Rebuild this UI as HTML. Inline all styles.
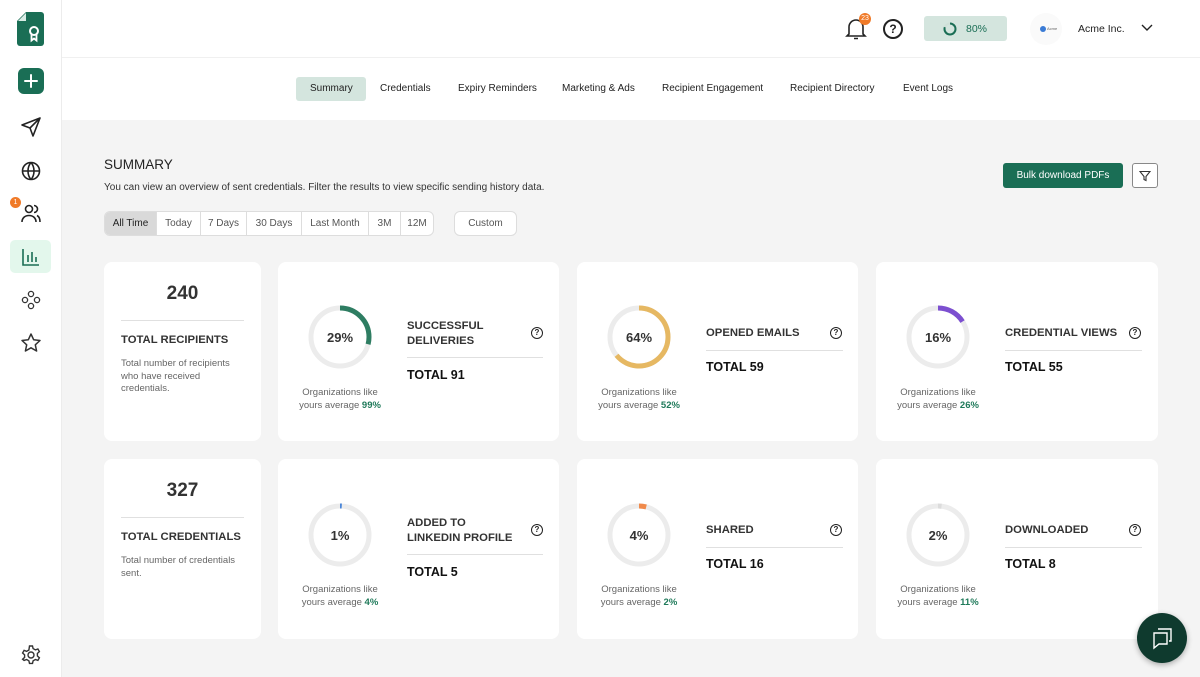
<!DOCTYPE html>
<html><head><meta charset="utf-8"><style>
*{box-sizing:border-box;margin:0;padding:0}
body{width:1200px;height:677px;overflow:hidden;font-family:"Liberation Sans",sans-serif;background:#f4f4f4;color:#222;position:relative}
.abs{position:absolute}
.side{left:0;top:0;width:62px;height:677px;background:#fff;border-right:1px solid #ececec}
.top{left:62px;top:0;width:1138px;height:120px;background:#fff}
.hdrline{left:62px;top:57px;width:1138px;height:1px;background:#f0f0f0}
.nav{top:77px;height:24px;font-size:10px;color:#222;line-height:24px}
.card{background:#fff;border-radius:8px}
.rt{font-size:11.3px;font-weight:bold;color:#333;line-height:15px}
.tot{font-size:12.5px;font-weight:bold;color:#111}
.org{font-size:9.5px;color:#666;text-align:center;width:96px;line-height:13px}
.org b{color:#1f7a5a}
.q{width:12px;height:12px;border:1.5px solid #222;border-radius:50%;font-size:8px;font-weight:bold;text-align:center;line-height:9px}
.div{height:1px;background:#e0e0e0}
.seg{display:flex;left:104px;top:211px;height:25px;border:1px solid #ddd;border-radius:6px;overflow:hidden;background:#fff;font-size:10px;color:#555}
.seg div{line-height:23px;border-right:1px solid #ddd;text-align:center}
.seg div:last-child{border-right:none}
</style></head><body>
<div class="abs side"></div>
<div class="abs top"></div>
<div class="abs hdrline"></div>
<svg class="abs" style="left:17px;top:12px" width="27" height="34" viewBox="0 0 27 34"><path d="M9 0H24a3 3 0 0 1 3 3V31a3 3 0 0 1-3 3H3a3 3 0 0 1-3-3V9Z" fill="#1a6e55"/><path d="M1 9L9 1V9Z" fill="#d9ece5"/><circle cx="17" cy="19" r="4" fill="none" stroke="#fff" stroke-width="2"/><path d="M14.5 22.5v6l2.5-2 2.5 2v-6" fill="none" stroke="#fff" stroke-width="1.8"/></svg>
<div class="abs" style="left:18px;top:68px;width:26px;height:26px;background:#1a6e55;border-radius:6px"></div>
<svg class="abs" style="left:18px;top:68px" width="26" height="26"><path d="M13 7v12M7 13h12" stroke="#fff" stroke-width="2" stroke-linecap="round"/></svg>
<svg class="abs" style="left:20px;top:116px" width="22" height="22" viewBox="0 0 22 22" fill="none" stroke="#222" stroke-width="1.6" stroke-linejoin="round"><path d="M20 2L2 9l8 3 3 8z M20 2L10 12"/></svg>
<svg class="abs" style="left:20px;top:160px" width="22" height="22" viewBox="0 0 22 22" fill="none" stroke="#222" stroke-width="1.6"><circle cx="11" cy="11" r="8.5"/><path d="M2.5 11h17M11 2.5c-4 4.5-4 12.5 0 17M11 2.5c4 4.5 4 12.5 0 17"/></svg>
<svg class="abs" style="left:20px;top:202px" width="22" height="22" viewBox="0 0 22 22" fill="none" stroke="#222" stroke-width="1.6"><circle cx="9" cy="7" r="3.5"/><path d="M2 20c0-4 3-6.5 7-6.5s7 2.5 7 6.5M14 3.5a3.5 3.5 0 0 1 0 7M17 13.5c2 1 3 3 3 6.5"/></svg>
<div class="abs" style="left:10px;top:197px;width:11px;height:11px;border-radius:50%;background:#f07a28;color:#fff;font-size:7px;text-align:center;line-height:11px">1</div>
<div class="abs" style="left:10px;top:240px;width:41px;height:33px;background:#e3f7ec;border-radius:5px"></div>
<svg class="abs" style="left:20px;top:246px" width="22" height="22" viewBox="0 0 22 22" fill="none" stroke="#1a6e55" stroke-width="1.6"><path d="M3 3v16h16M8 16V9M12 16V6M16 16v-5"/></svg>
<svg class="abs" style="left:20px;top:289px" width="22" height="22" viewBox="0 0 22 22" fill="none" stroke="#333" stroke-width="1.3"><circle cx="11" cy="5" r="2.6"/><circle cx="11" cy="17" r="2.6"/><circle cx="5" cy="11" r="2.6"/><circle cx="17" cy="11" r="2.6"/></svg>
<svg class="abs" style="left:20px;top:332px" width="22" height="22" viewBox="0 0 22 22" fill="none" stroke="#333" stroke-width="1.5" stroke-linejoin="round"><path d="M11 2l2.7 5.8 6.3.7-4.7 4.3 1.3 6.2L11 15.8 5.4 19l1.3-6.2L2 8.5l6.3-.7z"/></svg>
<svg class="abs" style="left:20px;top:644px" width="22" height="22" viewBox="0 0 22 22" fill="none" stroke="#333" stroke-width="1.4"><circle cx="11" cy="11" r="3"/><path d="M9.5 2h3l.6 2.6 2.3 1.3 2.5-.9 1.5 2.6-2 1.8v2.6l2 1.8-1.5 2.6-2.5-.9-2.3 1.3-.6 2.6h-3l-.6-2.6-2.3-1.3-2.5.9L2.6 15.2l2-1.8v-2.6l-2-1.8L4.1 6.4l2.5.9 2.3-1.3z"/></svg>
<svg class="abs" style="left:845px;top:17px" width="22" height="24" viewBox="0 0 22 24" fill="none" stroke="#222" stroke-width="1.6"><path d="M4 17V10a7 7 0 0 1 14 0v7l2 2H2z M9 21.5h4"/></svg>
<div class="abs" style="left:859px;top:13px;width:12px;height:12px;border-radius:50%;background:#f07a28;color:#fff;font-size:7px;text-align:center;line-height:12px">23</div>
<div class="abs" style="left:883px;top:19px;width:20px;height:20px;border:2px solid #222;border-radius:50%;font-size:12px;font-weight:bold;text-align:center;line-height:16px">?</div>
<div class="abs" style="left:924px;top:16px;width:83px;height:25px;background:#d4e5de;border-radius:3px"></div>
<svg class="abs" style="left:943px;top:22px" width="14" height="14"><circle cx="7" cy="7" r="5.5" fill="none" stroke="#cfe0d8" stroke-width="2"/><circle cx="7" cy="7" r="5.5" fill="none" stroke="#1a6e55" stroke-width="2" stroke-dasharray="27.6 34.6" transform="rotate(-90 7 7)"/></svg>
<div class="abs" style="left:966px;top:23px;font-size:10.5px;color:#1a6e55">80%</div>
<div class="abs" style="left:1030px;top:13px;width:32px;height:32px;border-radius:50%;background:#fafafa"></div>
<div class="abs" style="left:1040px;top:26px;width:6px;height:6px;border-radius:50%;background:#3a7bd5"></div>
<div class="abs" style="left:1047px;top:26px;font-size:4px;color:#666">Acme</div>
<div class="abs" style="left:1078px;top:23px;font-size:10.5px;color:#222">Acme Inc.</div>
<svg class="abs" style="left:1141px;top:23px" width="12" height="10"><path d="M1 2l5 5 5-5" fill="none" stroke="#222" stroke-width="1.4"/></svg>
<div class="abs" style="left:296px;top:77px;width:70px;height:24px;background:#d4e5de;border-radius:3px"></div>
<div class="abs nav" style="left:310px">Summary</div>
<div class="abs nav" style="left:380px">Credentials</div>
<div class="abs nav" style="left:458px">Expiry Reminders</div>
<div class="abs nav" style="left:562px">Marketing &amp; Ads</div>
<div class="abs nav" style="left:662px">Recipient Engagement</div>
<div class="abs nav" style="left:790px">Recipient Directory</div>
<div class="abs nav" style="left:903px">Event Logs</div>
<div class="abs" style="left:104px;top:157px;font-size:13.5px;color:#222">SUMMARY</div>
<div class="abs" style="left:104px;top:182px;font-size:10px;color:#333">You can view an overview of sent credentials. Filter the results to view specific sending history data.</div>
<div class="abs seg"><div style="width:52px;background:#d9d9d9;color:#222">All Time</div><div style="width:44px">Today</div><div style="width:46px">7 Days</div><div style="width:55px">30 Days</div><div style="width:67px">Last Month</div><div style="width:32px">3M</div><div style="width:32px">12M</div></div>
<div class="abs" style="left:454px;top:211px;width:63px;height:25px;border:1px solid #ddd;border-radius:6px;background:#fff;font-size:10px;color:#555;text-align:center;line-height:23px">Custom</div>
<div class="abs" style="left:1003px;top:163px;width:120px;height:25px;background:#1a6e55;border-radius:3px;color:#fff;font-size:10px;text-align:center;line-height:25px">Bulk download PDFs</div>
<div class="abs" style="left:1132px;top:163px;width:26px;height:25px;border:1px solid #888;border-radius:3px;background:#fff"></div>
<svg class="abs" style="left:1139px;top:170px" width="12" height="12"><path d="M1 1.5h10L7 6.5V10.5L5 9.5V6.5z" fill="none" stroke="#333" stroke-width="1.1"/></svg>
<div class="abs card" style="left:104px;top:262px;width:157px;height:179px"></div>
<div class="abs" style="left:104px;top:283px;width:157px;text-align:center;font-size:19px;font-weight:bold;color:#333">240</div>
<div class="abs div" style="left:121px;top:320px;width:123px"></div>
<div class="abs rt" style="left:121px;top:333px">TOTAL RECIPIENTS</div>
<div class="abs" style="left:121px;top:358px;width:125px;font-size:9.5px;color:#666;line-height:12.5px">Total number of recipients who have received credentials.</div>
<div class="abs card" style="left:104px;top:459px;width:157px;height:180px"></div>
<div class="abs" style="left:104px;top:480px;width:157px;text-align:center;font-size:19px;font-weight:bold;color:#333">327</div>
<div class="abs div" style="left:121px;top:517px;width:123px"></div>
<div class="abs rt" style="left:121px;top:530px">TOTAL CREDENTIALS</div>
<div class="abs" style="left:121px;top:555px;width:125px;font-size:9.5px;color:#666;line-height:12.5px">Total number of credentials sent.</div>

<div class="abs card" style="left:278px;top:262px;width:281px;height:179px"></div>
<svg class="abs" style="left:306px;top:303px" width="68" height="68"><circle cx="34" cy="34" r="29" fill="none" stroke="#ececec" stroke-width="5"/><circle cx="34" cy="34" r="29" fill="none" stroke="#2e7d62" stroke-width="5" stroke-dasharray="52.8 200" transform="rotate(-90 34 34)"/><text x="34" y="39" text-anchor="middle" font-family="Liberation Sans" font-weight="bold" font-size="13" fill="#333">29%</text></svg>
<div class="abs org" style="left:292px;top:386px">Organizations like yours average <b>99%</b></div>
<div class="abs rt" style="left:407px;top:319px">SUCCESSFUL<br>DELIVERIES</div>
<div class="abs q" style="left:531px;top:327px">?</div>
<div class="abs div" style="left:407px;top:357px;width:136px"></div>
<div class="abs tot" style="left:407px;top:368px">TOTAL 91</div>

<div class="abs card" style="left:577px;top:262px;width:281px;height:179px"></div>
<svg class="abs" style="left:605px;top:303px" width="68" height="68"><circle cx="34" cy="34" r="29" fill="none" stroke="#ececec" stroke-width="5"/><circle cx="34" cy="34" r="29" fill="none" stroke="#e6b862" stroke-width="5" stroke-dasharray="116.6 200" transform="rotate(-90 34 34)"/><text x="34" y="39" text-anchor="middle" font-family="Liberation Sans" font-weight="bold" font-size="13" fill="#333">64%</text></svg>
<div class="abs org" style="left:591px;top:386px">Organizations like yours average <b>52%</b></div>
<div class="abs rt" style="left:706px;top:326px">OPENED EMAILS</div>
<div class="abs q" style="left:830px;top:327px">?</div>
<div class="abs div" style="left:706px;top:350px;width:137px"></div>
<div class="abs tot" style="left:706px;top:360px">TOTAL 59</div>

<div class="abs card" style="left:876px;top:262px;width:282px;height:179px"></div>
<svg class="abs" style="left:904px;top:303px" width="68" height="68"><circle cx="34" cy="34" r="29" fill="none" stroke="#ececec" stroke-width="5"/><circle cx="34" cy="34" r="29" fill="none" stroke="#7c4fd0" stroke-width="5" stroke-dasharray="29.2 200" transform="rotate(-90 34 34)"/><text x="34" y="39" text-anchor="middle" font-family="Liberation Sans" font-weight="bold" font-size="13" fill="#333">16%</text></svg>
<div class="abs org" style="left:890px;top:386px">Organizations like yours average <b>26%</b></div>
<div class="abs rt" style="left:1005px;top:326px">CREDENTIAL VIEWS</div>
<div class="abs q" style="left:1129px;top:327px">?</div>
<div class="abs div" style="left:1005px;top:350px;width:137px"></div>
<div class="abs tot" style="left:1005px;top:360px">TOTAL 55</div>

<div class="abs card" style="left:278px;top:459px;width:281px;height:180px"></div>
<svg class="abs" style="left:306px;top:501px" width="68" height="68"><circle cx="34" cy="34" r="29" fill="none" stroke="#ececec" stroke-width="5"/><circle cx="34" cy="34" r="29" fill="none" stroke="#4a86d8" stroke-width="5" stroke-dasharray="1.8 200" transform="rotate(-90 34 34)"/><text x="34" y="39" text-anchor="middle" font-family="Liberation Sans" font-weight="bold" font-size="13" fill="#333">1%</text></svg>
<div class="abs org" style="left:292px;top:583px">Organizations like yours average <b>4%</b></div>
<div class="abs rt" style="left:407px;top:516px">ADDED TO<br>LINKEDIN PROFILE</div>
<div class="abs q" style="left:531px;top:524px">?</div>
<div class="abs div" style="left:407px;top:554px;width:136px"></div>
<div class="abs tot" style="left:407px;top:565px">TOTAL 5</div>

<div class="abs card" style="left:577px;top:459px;width:281px;height:180px"></div>
<svg class="abs" style="left:605px;top:501px" width="68" height="68"><circle cx="34" cy="34" r="29" fill="none" stroke="#ececec" stroke-width="5"/><circle cx="34" cy="34" r="29" fill="none" stroke="#f08a4b" stroke-width="5" stroke-dasharray="7.3 200" transform="rotate(-90 34 34)"/><text x="34" y="39" text-anchor="middle" font-family="Liberation Sans" font-weight="bold" font-size="13" fill="#333">4%</text></svg>
<div class="abs org" style="left:591px;top:583px">Organizations like yours average <b>2%</b></div>
<div class="abs rt" style="left:706px;top:523px">SHARED</div>
<div class="abs q" style="left:830px;top:524px">?</div>
<div class="abs div" style="left:706px;top:547px;width:137px"></div>
<div class="abs tot" style="left:706px;top:557px">TOTAL 16</div>

<div class="abs card" style="left:876px;top:459px;width:282px;height:180px"></div>
<svg class="abs" style="left:904px;top:501px" width="68" height="68"><circle cx="34" cy="34" r="29" fill="none" stroke="#ececec" stroke-width="5"/><circle cx="34" cy="34" r="29" fill="none" stroke="#dcdcdc" stroke-width="5" stroke-dasharray="3.6 200" transform="rotate(-90 34 34)"/><text x="34" y="39" text-anchor="middle" font-family="Liberation Sans" font-weight="bold" font-size="13" fill="#333">2%</text></svg>
<div class="abs org" style="left:890px;top:583px">Organizations like yours average <b>11%</b></div>
<div class="abs rt" style="left:1005px;top:523px">DOWNLOADED</div>
<div class="abs q" style="left:1129px;top:524px">?</div>
<div class="abs div" style="left:1005px;top:547px;width:137px"></div>
<div class="abs tot" style="left:1005px;top:557px">TOTAL 8</div>

<div class="abs" style="left:1137px;top:613px;width:50px;height:50px;border-radius:50%;background:#0f3a2e;box-shadow:0 2px 6px rgba(0,0,0,.3)"></div>
<svg class="abs" style="left:1150px;top:626px" width="24" height="24" viewBox="0 0 24 24" fill="none" stroke="#fff" stroke-width="1.4"><path d="M8 3h13v12h-2M4 7h13v11H9l-5 4z"/></svg>
</body></html>
